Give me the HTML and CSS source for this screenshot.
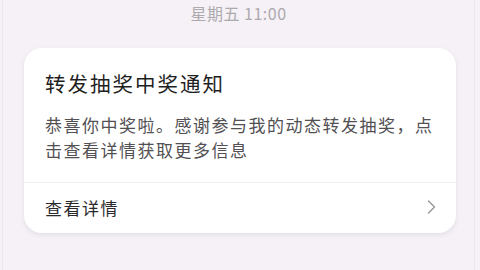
FILE: index.html
```html
<!DOCTYPE html>
<html>
	<head>
		<meta charset="UTF-8">
		<title>通知</title>
		<link rel="stylesheet" href="styles.css">
	</head>
	<body>
		<div class="frame">
			<div class="time">星期五 11:00</div>
			<div class="card">
				<div class="card-body">
					<h3 class="title">转发抽奖中奖通知</h3>
					<p class="text">恭喜你中奖啦。感谢参与我的动态转发抽奖，点击查看详情获取更多信息</p>
				</div>
				<a class="more" href="javascript:;">
					<span>查看详情</span>
					<svg class="arrow" width="9" height="14" viewBox="0 0 9 14">
						<path d="M1.5 1 L7.5 7 L1.5 13" fill="none" stroke="#9a979b" stroke-width="1.4" stroke-linecap="round" stroke-linejoin="round"/>
					</svg>
				</a>
			</div>
		</div>
	</body>
</html>
```

FILE: styles.css
```css
html,body{
	margin: 0;
	padding: 0;
	background: #f5f1f6;
}
body{
	font-family: "Noto Sans CJK SC", "Noto Sans", sans-serif;
}
.frame{
	height: 270px;
	margin: 0 5px 0 2px;
	border-left: 1px solid #ebe6ec;
	border-right: 1px solid #ebe6ec;
	box-sizing: border-box;
}
.time{
	height: 48px;
	padding-top: 2px;
	box-sizing: border-box;
	text-align: center;
	font-size: 16px;
	line-height: 22px;
	letter-spacing: 0.5px;
	color: #adaaae;
}
.card{
	margin: 0 18px 0 21px;
	background: #fff;
	border-radius: 18px;
	box-shadow: 0 2px 5px rgba(110,110,150,0.14);
}
.card-body{
	padding: 20px 21px 20px;
	border-bottom: 1px solid #f0eef1;
}
.title{
	margin: 0;
	font-size: 20.5px;
	font-weight: normal;
	line-height: 30px;
	letter-spacing: 2px;
	color: #1f1f1f;
}
.text{
	margin: 14px 0 0;
	font-size: 17px;
	line-height: 25px;
	letter-spacing: 1.5px;
	color: #525053;
}
.more{
	display: flex;
	align-items: center;
	justify-content: space-between;
	height: 50px;
	padding: 0 20px 2px 21px;
	box-sizing: border-box;
	text-decoration: none;
	font-size: 17px;
	letter-spacing: 1.5px;
	color: #2a292b;
}
.arrow{
	display: block;
}
```
